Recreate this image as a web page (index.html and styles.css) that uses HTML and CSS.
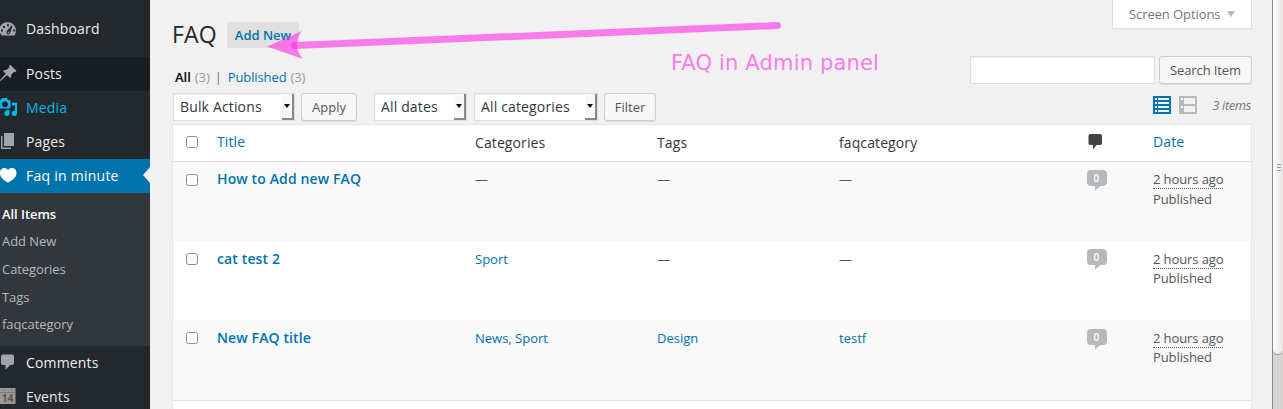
FILE: index.html
```html
<!DOCTYPE html>
<html lang="en">
<head>
<meta charset="utf-8">
<title>FAQ</title>
<link rel="stylesheet" href="styles.css">
</head>
<body>
<nav class="sidebar">
  <a class="item dashboard"><svg class="icon" width="17" height="18" viewBox="0 0 17 18"><path fill="#a0a5aa" fill-rule="evenodd" d="M2 15.500Q0 13.500 -1 10.500A8.500 8.500 0 1 1 14.500 15.500ZM7 4.200v2h2v-2ZM3 6v2h2V6ZM1 9.500v2h2v-2ZM13.200 9.500v2h2v-2ZM11.500 5.500L7.200 10.500Q5.500 12.500 7.200 14Q9 15 10 13Q11 10 12.500 6.200ZM7.700 11.700h1.200v1.500H7.700Z"/></svg><span>Dashboard</span></a>
  <a class="item posts"><svg class="icon" width="17" height="18" viewBox="0 0 17 18"><path fill="#a0a5aa" d="M10.300 .8L16.500 7L15.200 8.200L14.100 7.800L11.100 11Q11.400 13 10.400 14.300L7 11L1 16.500L-.2 17L.3 15.800L5.800 9.800L2.800 6.700Q4.500 5.800 6.500 6.100L9.400 3.200L9 2.100Z"/></svg><span>Posts</span></a>
  <a class="item media"><svg class="icon" width="17" height="18" viewBox="0 0 17 18"><path fill="#00b9eb" fill-rule="evenodd" d="M0 2h1l1-2h5l1 2h1.500q1 0 1 1v6.500q0 1-1 1H0ZM5 3.200a3 3 0 1 0 .01 0ZM12 4.800h5v10.500a2.600 2.600 0 1 1-2-2.500V7.500h-3ZM5.500 12h4v3.300a2.600 2.600 0 1 1-2-2.500Z"/></svg><span>Media</span></a>
  <a class="item pages"><svg class="icon" width="17" height="18" viewBox="0 0 17 18"><path fill="#a0a5aa" d="M4 1h10v13H4ZM1 4h1.500v11.500H11V17H1Z"/></svg><span>Pages</span></a>
  <a class="item current"><svg class="icon" width="17" height="18" viewBox="0 0 17 18"><path fill="#fff" d="M8 4C9.500 1 16.500 1 16.500 7C16.500 12 12 14 8 16.700C4 14 0 12 0 7C0 1 6.500 1 8 4Z"/></svg><span>Faq in minute</span></a>
  <div class="submenu">
    <a class="selected">All Items</a><a>Add New</a><a>Categories</a><a>Tags</a><a>faqcategory</a>
  </div>
  <a class="item"><svg class="icon" width="17" height="18" viewBox="0 0 17 18"><path fill="#a0a5aa" d="M3 1.500h9q2 0 2 2v6.500q0 2-2 2H10L5.500 17V12H3q-2 0-2-2V3.500q0-2 2-2Z"/></svg><span>Comments</span></a>
  <a class="item"><svg class="icon" width="17" height="18" viewBox="0 0 17 18"><path fill="#999" d="M0 1h15.500v16H0Z"/><path fill="#777" d="M0 5h15.500v1H0ZM3 2h1v2H3ZM11 2h1v2h-1Z"/><text class="day" x="7.700" y="15" text-anchor="middle">14</text></svg><span>Events</span></a>
</nav>
<main class="content">
  <header class="heading">
    <h1>FAQ</h1><a class="add-new">Add New</a>
    <div class="screen-options"><span>Screen Options</span><i class="triangle"></i></div>
  </header>
  <section class="filters">
    <div class="views"><b>All</b><span class="count">(3)</span><span class="bar">|</span><a>Published</a><span class="count">(3)</span></div>
    <form class="search"><input type="text" class="search-input"><button type="button" class="button search-button">Search Item</button></form>
  </section>
  <section class="toolbar">
    <div class="select bulk"><span>Bulk Actions</span><i class="drop"></i></div>
    <button class="button apply">Apply</button>
    <div class="select dates"><span>All dates</span><i class="drop"></i></div>
    <div class="select cats"><span>All categories</span><i class="drop"></i></div>
    <button class="button filter">Filter</button>
    <div class="modes">
      <svg width="18" height="18" viewBox="0 0 18 18"><path fill="#0073aa" d="M0 0h18v18H0Z"/><path fill="#f1f1f1" d="M2 2h2v2H2ZM2 6h2v2H2ZM2 10h2v2H2ZM2 14h2v2H2ZM5 2h11v2H5ZM5 6h11v2H5ZM5 10h11v2H5ZM5 14h11v2H5Z"/></svg>
      <svg width="18" height="18" viewBox="0 0 18 18"><path fill="#b4b9be" d="M0 0h18v18H0Z"/><path fill="#f1f1f1" d="M2 2h2v2H2ZM2 10h2v2H2ZM5 2h11v6H5ZM5 10h11v6H5Z"/></svg>
      <em>3 items</em>
    </div>
  </section>
  <section class="table">
    <div class="row head">
      <div><i class="check"></i></div><a>Title</a><span>Categories</span><span>Tags</span><span>faqcategory</span>
      <div><svg class="comment-head" width="16" height="17" viewBox="0 0 16 17"><path fill="#444" d="M3 1h10q2 0 2 2v7q0 2-2 2H9.500L6 16.500V12H3q-1.500 0-1.500-2V3q0-2 1.500-2Z"/></svg></div><a>Date</a>
    </div>
    <div class="row odd first">
      <div><i class="check"></i></div><a class="title">How to Add new FAQ</a><span>—</span><span>—</span><span>—</span>
      <div class="bubble"><svg width="20" height="21" viewBox="0 0 20 21"><path fill="#b4b9be" d="M4 0h12q4 0 4 4v8q0 4-4 4h-2.500L8 20.500V16H4q-4 0-4-4V4q0-4 4-4Z"/><text class="number" x="9.300" y="11.500" text-anchor="middle">0</text></svg></div>
      <div class="date"><span class="ago">2 hours ago</span><span>Published</span></div>
    </div>
    <div class="row even">
      <div><i class="check"></i></div><a class="title">cat test 2</a><a class="term">Sport</a><span class="term">—</span><span class="term">—</span>
      <div class="bubble"><svg width="20" height="21" viewBox="0 0 20 21"><path fill="#b4b9be" d="M4 0h12q4 0 4 4v8q0 4-4 4h-2.500L8 20.500V16H4q-4 0-4-4V4q0-4 4-4Z"/><text class="number" x="9.300" y="11.500" text-anchor="middle">0</text></svg></div>
      <div class="date term"><span class="ago">2 hours ago</span><span>Published</span></div>
    </div>
    <div class="row odd last">
      <div><i class="check"></i></div><a class="title">New FAQ title</a><span class="term"><a>News</a>, <a>Sport</a></span><a class="term">Design</a><a class="term">testf</a>
      <div class="bubble"><svg width="20" height="21" viewBox="0 0 20 21"><path fill="#b4b9be" d="M4 0h12q4 0 4 4v8q0 4-4 4h-2.500L8 20.500V16H4q-4 0-4-4V4q0-4 4-4Z"/><text class="number" x="9.300" y="11.500" text-anchor="middle">0</text></svg></div>
      <div class="date term"><span class="ago">2 hours ago</span><span>Published</span></div>
    </div>
  </section>
</main>
<aside class="scrollbar"><div class="thumb"><i></i><i></i><i></i></div></aside>
<svg class="annotation" width="1283" height="409" viewBox="0 0 1283 409">
  <path class="shaft" d="M294.500 45.500L777.500 25.500"/>
  <path class="arrow" d="M267 46.500L302 31Q291 45 303 59Z"/>
  <text class="note" x="671" y="70">FAQ in Admin panel</text>
</svg>
</body>
</html>
```
FILE: styles.css
```css
* { box-sizing: border-box; }
body {
  margin: 0;
  width: 1283px;
  height: 409px;
  overflow: hidden;
  display: flex;
  position: relative;
  background: #f1f1f1;
  color: #555;
  font: 13px/19px "Open Sans", sans-serif;
}
a { color: #0073aa; text-decoration: none; }

.sidebar { width: 150px; height: 409px; overflow: hidden; background: #23282d; flex: none; }
.item { display: flex; align-items: center; height: 34px; padding-bottom: 2px; color: #eee; font-size: 14px; letter-spacing: .15px; }
.item span { padding-left: 9px; white-space: nowrap; }
.icon { flex: none; }
.dashboard { height: 57px; padding-bottom: 0; }
.posts { background: #191e23; }
.media { color: #00b9eb; }
.current { background: #0073aa; color: #fff; letter-spacing: .25px; }
.current::after { content: ""; margin-left: auto; border: 8px solid transparent; border-right: 7px solid #f1f1f1; border-left: 0; }
.submenu { height: 153px; padding: 7.800px 0 0 2px; background: #32373c; display: flex; flex-direction: column; }
.submenu a { height: 27.600px; line-height: 27.600px; color: #b4b9be; letter-spacing: -.06px; }
.submenu .selected { color: #fff; font-weight: 600; }
.day { font: bold 10px "Open Sans", sans-serif; fill: #555; }

.content { width: 1122px; padding: 0 20px 0 22px; flex: none; display: flex; flex-direction: column; }
.heading { height: 56px; display: flex; align-items: flex-start; flex: none; }
h1 { margin: 0; padding-top: 20px; width: 55px; font-size: 23px; font-weight: 400; line-height: 29px; color: #23282d; letter-spacing: .2px; }
.add-new { margin-top: 22px; width: 72px; height: 26px; border-radius: 2px; background: #e0e0e0; font-weight: 600; line-height: 26px; text-align: center; }
.screen-options {
  margin-left: auto; width: 140px; height: 29px; padding: 0 16px; display: flex; align-items: center; justify-content: space-between;
  background: #fff; border: 1px solid #ddd; border-top: 0; color: #777; box-shadow: 0 1px 1px rgba(0,0,0,.04);
}
.screen-options span { letter-spacing: -.08px; }
.triangle { border: 4px solid transparent; border-top: 6px solid #b4b9be; border-bottom: 0; }
.filters { height: 37px; display: flex; justify-content: space-between; flex: none; }
.views { padding: 12px 0 0 3px; display: flex; color: #777; letter-spacing: -.1px; }
.views b { color: #000; font-weight: 600; letter-spacing: 0; }
.count { color: #999; margin-left: 4px; }
.bar { margin: 0 6px 0 5px; }
.search { display: flex; gap: 4px; }
.search-input { width: 185px; height: 28px; border: 1px solid #ddd; padding: 3px; background: #fff; box-shadow: inset 0 1px 2px rgba(0,0,0,.07); }
.button { height: 28px; padding: 0; border: 1px solid #ccc; border-radius: 3px; background: #f7f7f7; box-shadow: 0 1px 0 #ddd; color: #555; font: 13px/26px "Open Sans", sans-serif; }
.search-button { width: 93px; letter-spacing: -.1px; }
.toolbar { height: 31px; display: flex; align-items: flex-start; padding-left: 1px; flex: none; }
.select { height: 28px; display: flex; background: #fff; border: 1px solid #ddd; box-shadow: inset 0 1px 2px rgba(0,0,0,.07); color: #32373c; font-size: 14px; line-height: 26px; justify-content: space-between; padding-left: 6px; white-space: nowrap; letter-spacing: .15px; }
.bulk { width: 122px; }
.dates { width: 93px; margin-left: 17px; }
.cats { width: 124px; margin-left: 7px; }
.apply { width: 56px; margin-left: 6px; }
.filter { width: 52px; margin-left: 6px; }
.drop { width: 12px; height: 26px; flex: none; border-right: 2px solid #888; border-bottom: 2px solid #888; background: #f7f7f7; display: flex; align-items: center; justify-content: center; }
.drop::after { content: ""; border: 3.500px solid transparent; border-top: 4px solid #000; border-bottom: 0; }
.modes { margin-left: auto; display: flex; gap: 8px; padding: 3px 1px 0 0; }
.modes em { margin-left: 7px; color: #777; letter-spacing: -.4px; }

.table { height: 290px; background: #fff; border: 1px solid #e5e5e5; font-size: 13px; flex: none; }
.row { display: grid; grid-template-columns: 44px 258px 182px 182px 248px 66px 98px; height: 79px; padding-top: 8px; align-items: start; }
.head { height: 37px; border-bottom: 1px solid #e1e1e1; color: #32373c; font-size: 14px; letter-spacing: .1px; }
.head a { margin-top: -1px; }
.odd { background: #f9f9f9; }
.last { height: 81px; border-bottom: 1px solid #e1e1e1; }
.check { display: block; width: 12px; height: 12px; margin: 4px 0 0 13px; border: 1px solid #8f8b88; border-radius: 2.500px; background: #fff; }
.head .check { margin-top: 3px; }
.comment-head { display: block; }
.title { font-size: 14px; font-weight: 600; letter-spacing: .12px; }
.first .title { margin-top: -1px; }
.term { margin-top: 1px; }
.bubble svg { display: block; }
.last .bubble { padding-top: 1px; }
.number { font: 600 10px "Open Sans", sans-serif; fill: #fff; }
.date { display: flex; flex-direction: column; align-items: flex-start; letter-spacing: -.1px; }
.first .date { gap: 1px; }
.ago { height: 19px; line-height: 19px; border-bottom: 1px dotted #555; }

.scrollbar { width: 11px; height: 409px; background: #d6d4d2; border-left: 1px solid #8c8a88; }
.thumb { height: 355px; padding-top: 164px; border: 1px solid #8c8a88; border-top: 0; border-left: 0; border-right: 0; border-radius: 0 0 5px 5px; background: linear-gradient(90deg, #fff, #e7e5e3); }
.thumb i { display: block; width: 4px; height: 1px; margin: 0 0 2px 4px; background: #999; }

.annotation { position: absolute; left: 0; top: 0; pointer-events: none; }
.shaft { fill: none; stroke: #ff2de6; stroke-opacity: .6; stroke-width: 7; stroke-linecap: round; }
.arrow { fill: #ff2de6; fill-opacity: .6; }
.note { font: 21px "DejaVu Sans", sans-serif; fill: #fa7be9; letter-spacing: .17px; }
```
